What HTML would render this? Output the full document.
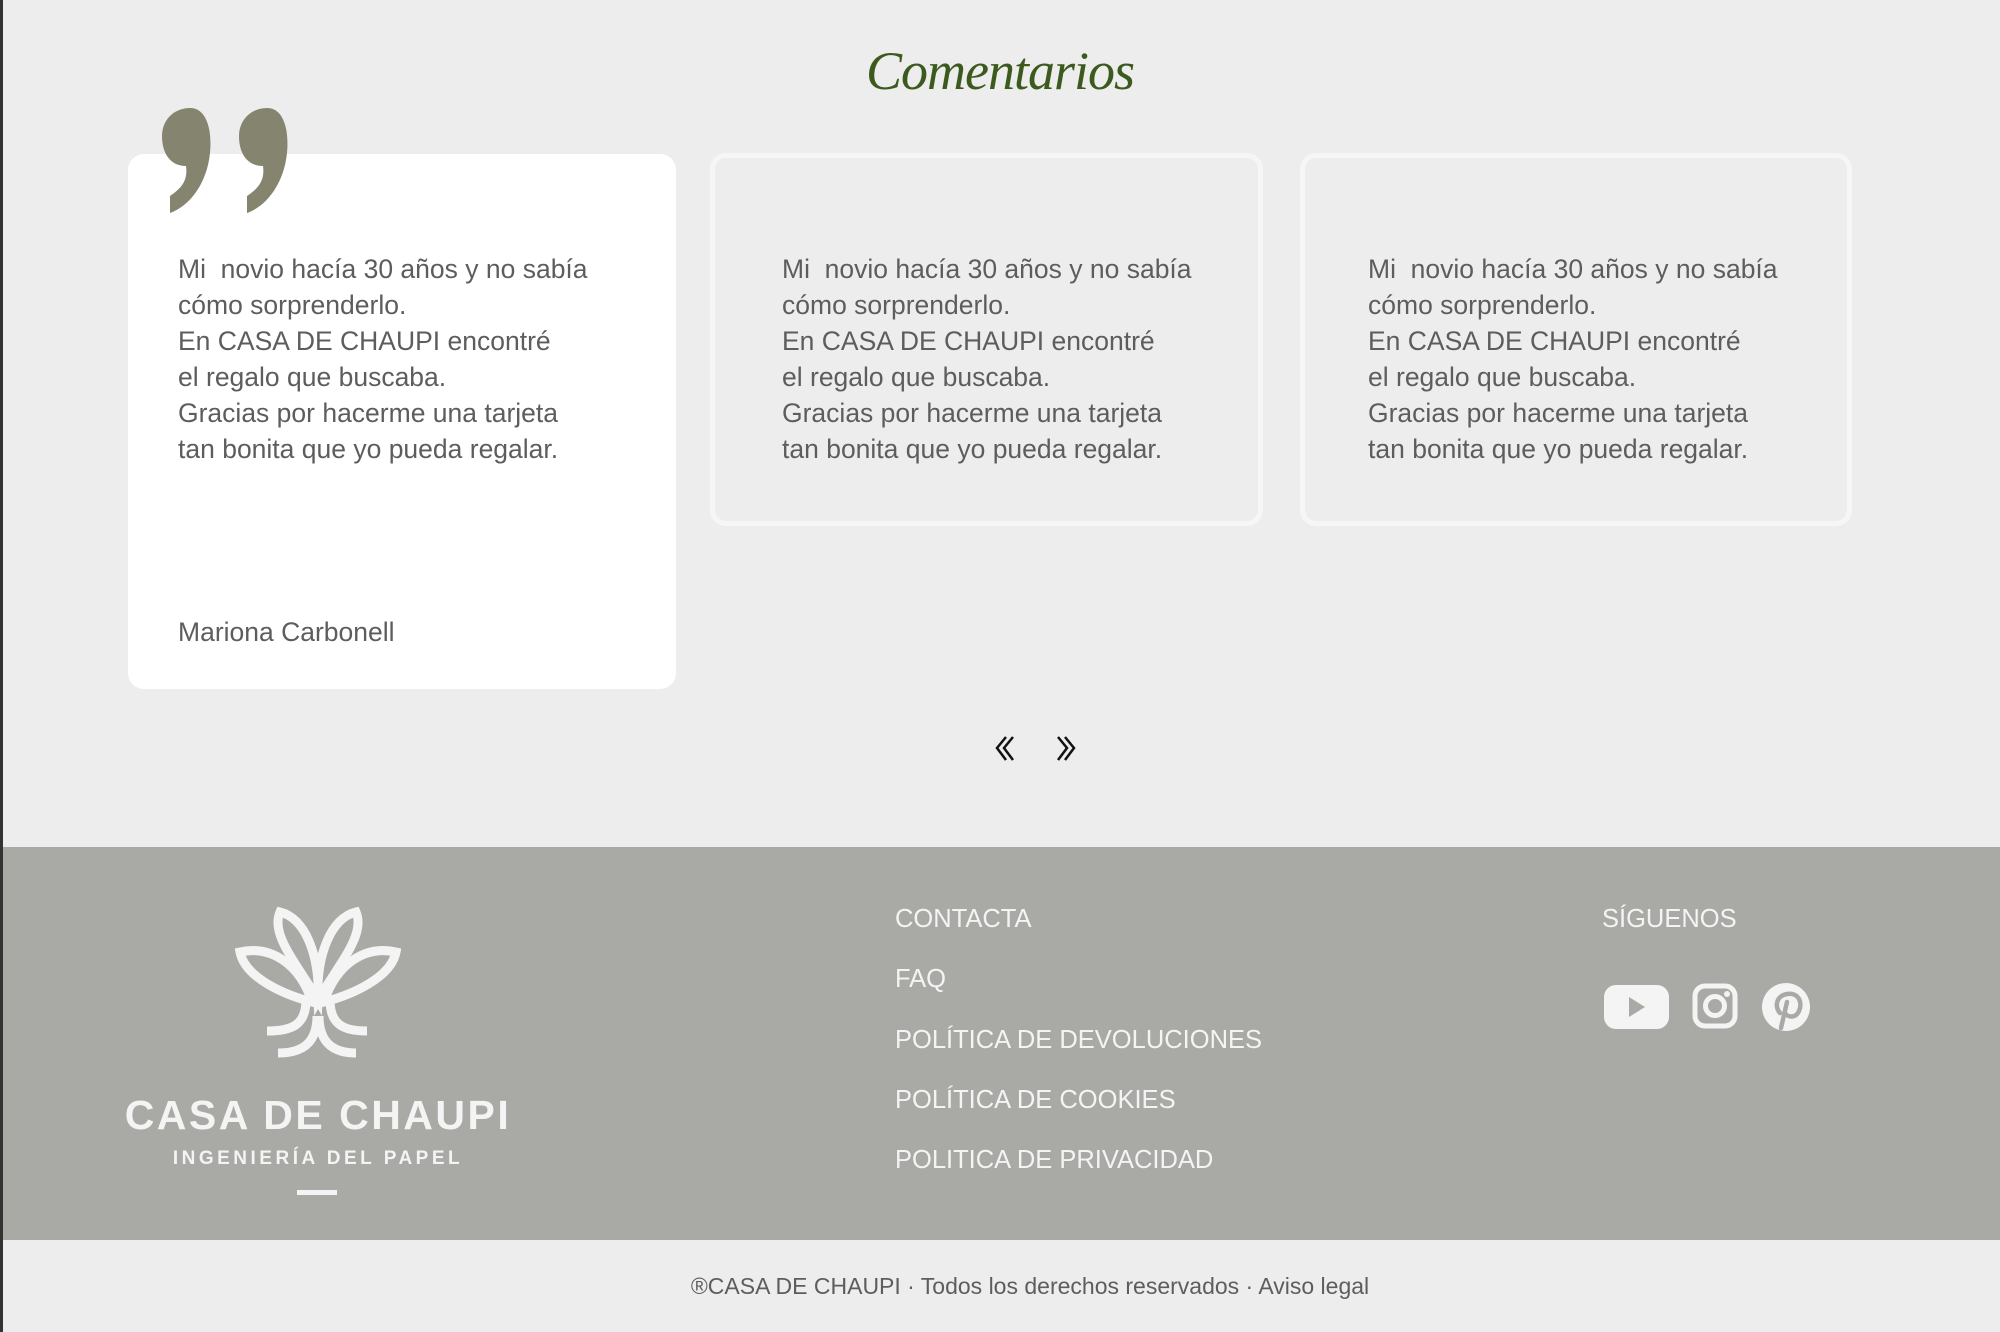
<!DOCTYPE html>
<html><head><meta charset="utf-8"><style>
*{margin:0;padding:0;box-sizing:border-box}
body{width:2000px;height:1332px;background:#ededed;position:relative;overflow:hidden;font-family:"Liberation Sans",sans-serif}
.t{position:absolute;color:#5d5d5d;font-size:26.5px;line-height:36px;white-space:pre}
.card{position:absolute;border-radius:16px}
.fl{position:absolute;left:895px;color:#f4f4f4;font-size:25.5px;line-height:30px}
</style></head><body>
<div style="position:absolute;left:0;top:0;width:3px;height:1332px;background:#333"></div>
<div style="position:absolute;left:0;top:40px;width:2000px;text-align:center;font-family:'Liberation Serif',serif;font-style:italic;font-size:54px;color:#3d5a1e;letter-spacing:-1px">Comentarios</div>
<div class="card" style="left:128px;top:154px;width:548px;height:535px;background:#fff"></div>
<div class="card" style="left:710px;top:153px;width:553px;height:373px;border:5px solid #f6f6f6"></div>
<div class="card" style="left:1300px;top:153px;width:552px;height:373px;border:5px solid #f6f6f6"></div>
<svg style="position:absolute;left:160px;top:108px" width="145" height="105" viewBox="0 0 145 105">
<path fill="#85846f" d="M30,0 C48,0 52,25 50,45 C47,75 30,98 10,105 L10,88 C22,80 28,72 26,58 C10,58 2,45 2,28 C2,12 14,0 30,0Z"/>
<path fill="#85846f" d="M107,0 C125,0 129,25 127,45 C124,75 107,98 87,105 L87,88 C99,80 105,72 103,58 C87,58 79,45 79,28 C79,12 91,0 107,0Z"/>
</svg>
<div class="t" style="left:178px;top:251px">Mi  novio hacía 30 años y no sabía
cómo sorprenderlo.
En CASA DE CHAUPI encontré
el regalo que buscaba.
Gracias por hacerme una tarjeta
tan bonita que yo pueda regalar.</div>
<div class="t" style="left:782px;top:251px">Mi  novio hacía 30 años y no sabía
cómo sorprenderlo.
En CASA DE CHAUPI encontré
el regalo que buscaba.
Gracias por hacerme una tarjeta
tan bonita que yo pueda regalar.</div>
<div class="t" style="left:1368px;top:251px">Mi  novio hacía 30 años y no sabía
cómo sorprenderlo.
En CASA DE CHAUPI encontré
el regalo que buscaba.
Gracias por hacerme una tarjeta
tan bonita que yo pueda regalar.</div>
<div class="t" style="left:178px;top:614px">Mariona Carbonell</div>
<svg style="position:absolute;left:992px;top:733px" width="90" height="32" viewBox="0 0 90 32" fill="none" stroke="#111" stroke-width="2.5">
<path d="M14,4 L5,15 L14,27 M21,4 L12,15 L21,27"/>
<path d="M66,4 L75,15 L66,27 M73,4 L82,15 L73,27"/>
</svg>
<div style="position:absolute;left:3px;top:847px;width:1997px;height:393px;background:#a9aaa5"></div>
<svg style="position:absolute;left:0;top:0" width="560" height="1240" fill="none" stroke="#f4f4f4" stroke-width="9" stroke-linecap="butt">
<path d="M318,1000 C298,965 270,935 280,912 C305,918 320,955 318,1000Z"/>
<path d="M318,1000 C338,965 366,935 356,912 C331,918 316,955 318,1000Z"/>
<path d="M312,1002 C285,995 245,978 240,952 C272,945 300,965 312,1002Z"/>
<path d="M324,1002 C351,995 391,978 396,952 C364,945 336,965 324,1002Z"/>
<path d="M306,1000 C306,1025 292,1031 267,1031"/>
<path d="M330,1000 C330,1025 344,1031 367,1031"/>
<path d="M317,1016 C317,1045 300,1053 278,1053"/>
<path d="M319,1016 C319,1045 336,1053 356,1053"/>
</svg>
<div style="position:absolute;left:110px;top:1091px;width:416px;text-align:center;color:#f4f4f4;font-weight:bold;font-size:41px;letter-spacing:2.5px;line-height:48px">CASA DE CHAUPI</div>
<div style="position:absolute;left:110px;top:1147px;width:416px;text-align:center;color:#f4f4f4;font-weight:bold;font-size:19px;letter-spacing:3.5px;line-height:24px">INGENIERÍA DEL PAPEL</div>
<div style="position:absolute;left:297px;top:1190px;width:40px;height:5px;background:#f4f4f4"></div>
<div class="fl" style="top:904px">CONTACTA</div>
<div class="fl" style="top:964px">FAQ</div>
<div class="fl" style="top:1025px">POLÍTICA DE DEVOLUCIONES</div>
<div class="fl" style="top:1085px">POLÍTICA DE COOKIES</div>
<div class="fl" style="top:1145px">POLITICA DE PRIVACIDAD</div>
<div class="fl" style="left:1602px;top:904px">SÍGUENOS</div>
<svg style="position:absolute;left:1597px;top:980px" width="220" height="55" viewBox="0 0 220 55">
<rect x="7" y="5" width="65" height="44" rx="12" fill="#f4f4f4"/>
<path d="M32,17 L32,37 L48,27Z" fill="#a9aaa5"/>
<rect x="98" y="6" width="40" height="40" rx="10" fill="none" stroke="#f4f4f4" stroke-width="5"/>
<circle cx="118" cy="26" r="9.5" fill="none" stroke="#f4f4f4" stroke-width="5"/>
<circle cx="130" cy="14" r="3" fill="#f4f4f4"/>
<circle cx="189" cy="27" r="24" fill="#f4f4f4"/>
<path d="M184,48 L190,22 M183,33 C178,28 178,16 190,14 C201,12 206,22 202,31 C199,38 191,38 188,33" fill="none" stroke="#a9aaa5" stroke-width="4.5" stroke-linecap="round"/>
</svg>
<div style="position:absolute;left:0;top:1271px;width:2060px;text-align:center;color:#5d5d5d;font-size:23px;line-height:30px">®CASA DE CHAUPI · Todos los derechos reservados · Aviso legal</div>
</body></html>
